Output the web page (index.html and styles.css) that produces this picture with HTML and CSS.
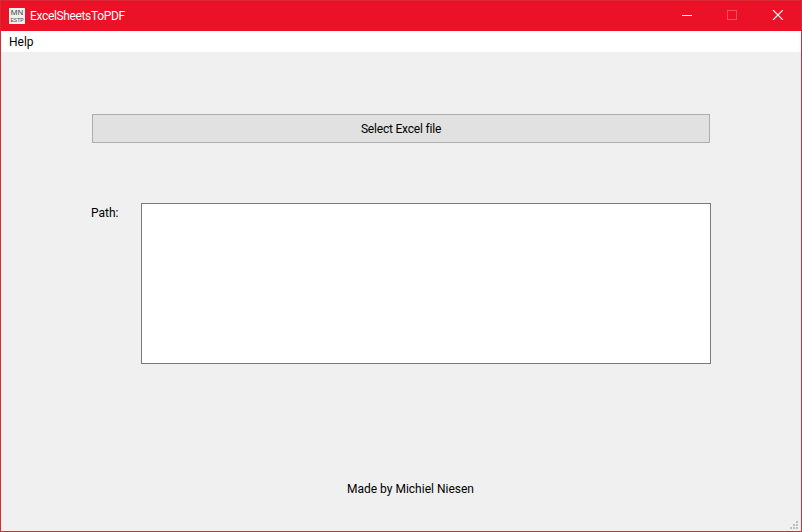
FILE: index.html
```html
<!DOCTYPE html>
<html lang="en">
<head>
  <meta charset="UTF-8">
  <title>ExcelSheetsToPDF</title>
  <link rel="stylesheet" href="styles.css">
</head>
<body>
  <div class="window">
    <div class="titlebar">
      <div class="app-icon">
        <span class="icon-top">MN</span>
        <span class="icon-bottom">ESTP</span>
      </div>
      <div class="title">ExcelSheetsToPDF</div>
      <div class="controls">
        <div class="control">
          <svg width="11" height="10" viewBox="0 0 11 10"><path d="M0 5.5H10" stroke="#fff" stroke-width="1" fill="none"/></svg>
        </div>
        <div class="control">
          <svg width="11" height="10" viewBox="0 0 11 10"><rect x="0.5" y="0.5" width="9" height="9" stroke="#f4505f" stroke-width="1" fill="none"/></svg>
        </div>
        <div class="control">
          <svg width="11" height="10" viewBox="0 0 11 10"><path d="M1 0L11 10M11 0L1 10" stroke="#fff" stroke-width="1.2" fill="none"/></svg>
        </div>
      </div>
    </div>
    <div class="menubar">
      <div class="menu-item">Help</div>
    </div>
    <div class="content">
      <button class="select-button">Select Excel file</button>
      <div class="path-row">
        <label class="path-label">Path:</label>
        <div class="path-box"></div>
      </div>
      <div class="footer">Made by Michiel Niesen</div>
      <svg class="grip" width="8" height="8" viewBox="0 0 8 8">
        <path d="M6 0h2v2H6zM3 3h2v2H3zM6 3h2v2H6zM0 6h2v2H0zM3 6h2v2H3zM6 6h2v2H6z" fill="#bdbdbd"/>
      </svg>
    </div>
  </div>
</body>
</html>
```

FILE: styles.css
```css
html, body {
  margin: 0;
  padding: 0;
}

body {
  font-family: Roboto, "Open Sans", sans-serif;
  font-size: 12px;
  color: #000;
}

.window {
  width: 802px;
  height: 532px;
  box-sizing: border-box;
  border: 1px solid #d8293a;
  background-color: #f0f0f0;
  display: flex;
  flex-direction: column;
  overflow: hidden;
}

.titlebar {
  height: 30px;
  flex-shrink: 0;
  background-color: #eb1126;
  color: #fff;
  display: flex;
  align-items: center;
  padding-left: 8px;
}

.app-icon {
  width: 16px;
  height: 16px;
  background-color: #f0f0f0;
  color: #444;
  display: flex;
  flex-direction: column;
  align-items: center;
  font-family: "Liberation Sans", sans-serif;
  overflow: hidden;
}

.icon-top {
  font-size: 8px;
  line-height: 9px;
}

.icon-bottom {
  font-size: 5px;
  line-height: 6px;
}

.title {
  margin-left: 5px;
  line-height: 16px;
  letter-spacing: -0.35px;
}

.controls {
  margin-left: auto;
  display: flex;
}

.control {
  width: 45px;
  height: 30px;
  box-sizing: border-box;
  padding: 0 0 2px 16px;
  display: flex;
  align-items: center;
}

.menubar {
  height: 21px;
  flex-shrink: 0;
  background-color: #fff;
  display: flex;
}

.menu-item {
  padding: 1px 8px 0;
  line-height: 21px;
}

.content {
  flex: 1;
  position: relative;
  display: flex;
  flex-direction: column;
  padding: 62px 0 0 90px;
}

.select-button {
  width: 618px;
  height: 29px;
  margin-left: 1px;
  padding: 0;
  box-sizing: border-box;
  background-color: #e1e1e1;
  border: 1px solid #adadad;
  font-family: inherit;
  font-size: 12px;
  letter-spacing: -0.2px;
  color: #000;
}

.path-row {
  display: flex;
  margin-top: 60px;
}

.path-label {
  width: 50px;
  line-height: 20px;
}

.path-box {
  width: 570px;
  height: 161px;
  box-sizing: border-box;
  background-color: #fff;
  border: 1px solid #7a7a7a;
}

.footer {
  margin-top: 115px;
  margin-left: 256px;
  line-height: 20px;
}

.grip {
  position: absolute;
  right: 3px;
  bottom: 2px;
}
```
